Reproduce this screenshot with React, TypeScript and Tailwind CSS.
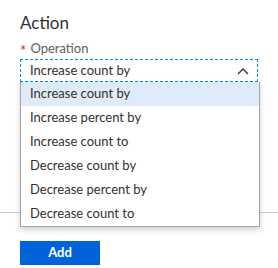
import { useState } from "react";

const OPTIONS = [
  "Increase count by",
  "Increase percent by",
  "Increase count to",
  "Decrease count by",
  "Decrease percent by",
  "Decrease count to",
];

function ChevronUp() {
  return (
    <svg width="12" height="8" viewBox="0 0 12 8" aria-hidden="true">
      <path d="M1 7 L6 2 L11 7" fill="none" stroke="#323130" strokeWidth="1.3" />
    </svg>
  );
}

export default function App() {
  const [selected] = useState(OPTIONS[0]);

  return (
    <div
      className="w-[278px] h-[268px] bg-white text-[#323130] overflow-hidden"
      style={{ fontFamily: '"Segoe UI", Lato, "Liberation Sans", sans-serif' }}
    >
      <div className="px-5 pt-[11px]">
        <h2 className="text-[17px] leading-[24px] font-normal">Action</h2>
        <div className="mt-[4px] flex items-center h-[18px] text-[13px] leading-[18px] text-[#605e5c]">
          <span className="text-[#e81123] text-[15px] mr-[4px] pt-[3px]">*</span>
          <span>Operation</span>
        </div>

        {/* Select with open list */}
        <div className="relative mt-[2px]">
          <div className="h-[23px] flex items-center justify-between border border-dashed border-[#0b8ed1] pl-[9px] pr-[8px] text-[13px]">
            <span>{selected}</span>
            <ChevronUp />
          </div>
          <ul
            role="listbox"
            className="absolute left-0 top-full w-[240px] bg-white border-x border-b border-[#a6a6a6] shadow-[0_3px_6px_rgba(0,0,0,0.18)] z-10"
          >
            {OPTIONS.map((opt) => (
              <li
                key={opt}
                className={`h-[24px] flex items-center pl-[9px] text-[13px] ${
                  opt === selected ? "bg-[#deecf9]" : ""
                }`}
              >
                {opt}
              </li>
            ))}
          </ul>
        </div>
      </div>

      <div className="mt-[130px] border-t border-[#c8c8c8]" />

      <div className="px-5 pt-[26px]">
        <button className="w-[80px] h-[24px] bg-[#0063da] text-white text-[13px] font-bold">
          Add
        </button>
      </div>
    </div>
  );
}
